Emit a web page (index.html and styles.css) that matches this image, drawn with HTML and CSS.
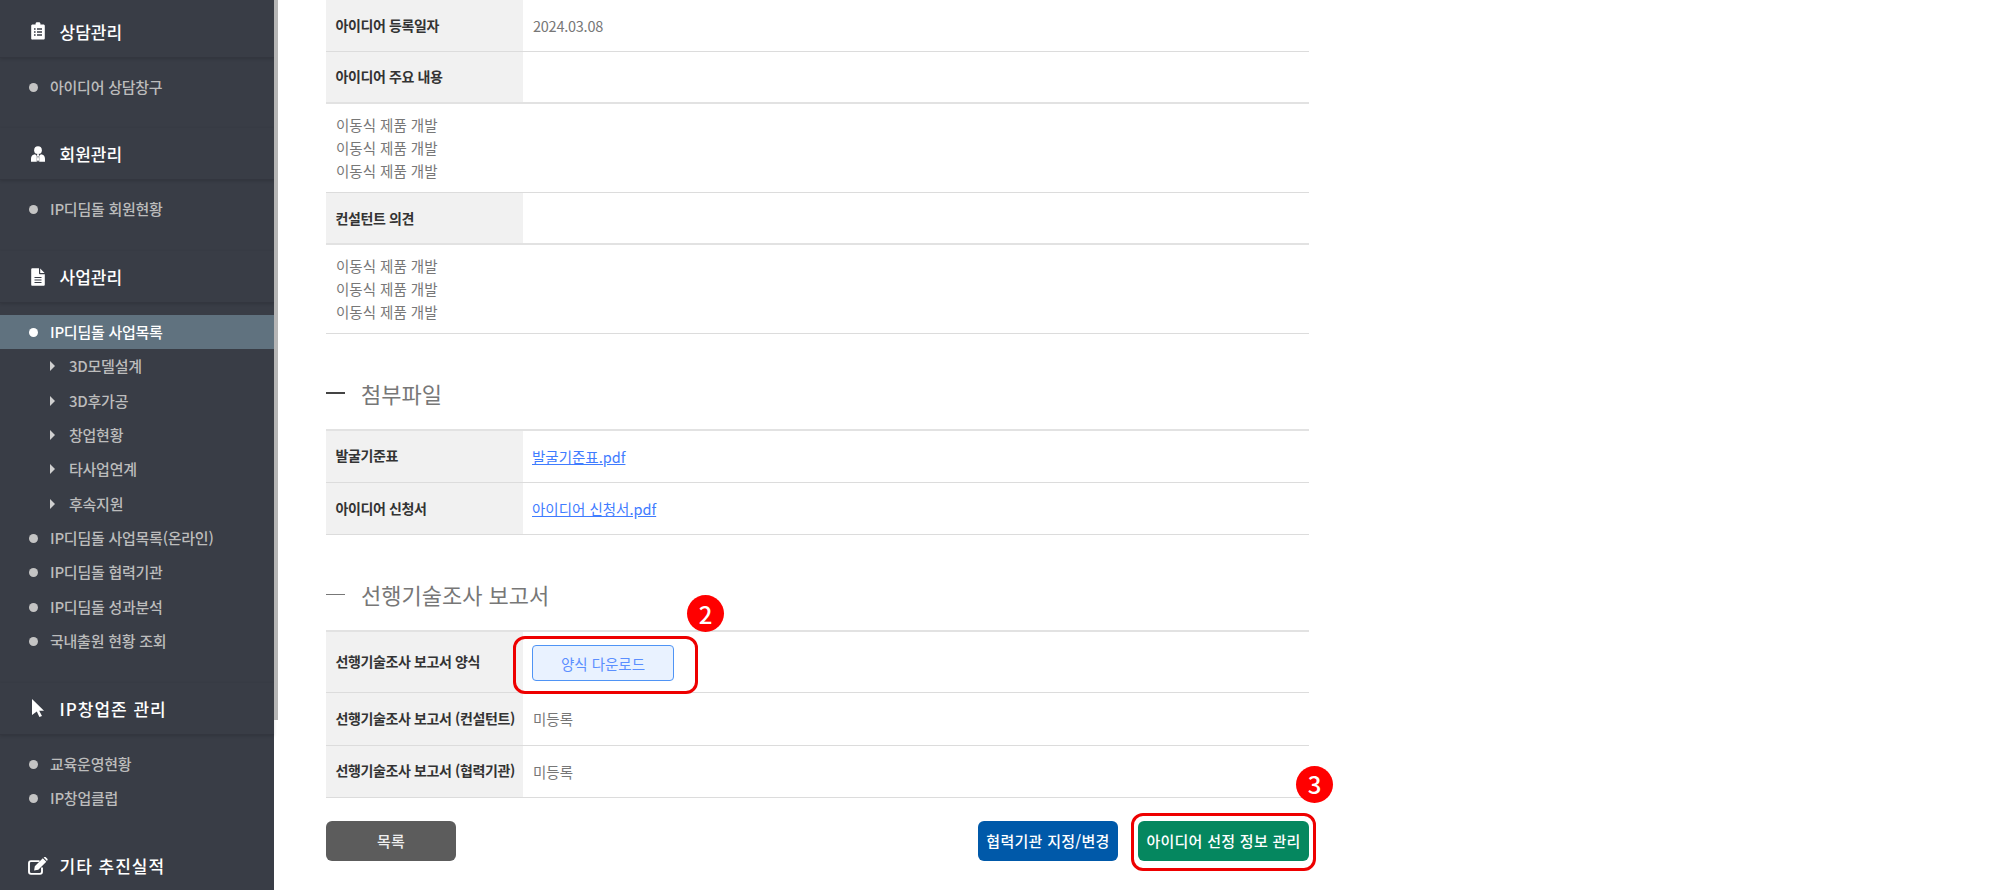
FILE: index.html
```html
<!DOCTYPE html>
<html lang="ko">
<head>
<meta charset="utf-8">
<title>선행기술조사 보고서</title>
<link rel="stylesheet" href="styles.css">
</head>
<body>
<div class="page">
  <aside class="sidebar">
    <div class="scrollbar"></div>
    <div class="side-inner">
      <section class="group">
        <h3 class="group-head">
          <svg class="gi" viewBox="0 0 14 18"><path fill="#fff" d="M1.5 2.5H4.6V1.6C4.6.8 5.2.2 6 .2H8c.8 0 1.4.6 1.4 1.4v.9h3.1c.7 0 1.3.6 1.3 1.3v12.5c0 .7-.6 1.3-1.3 1.3h-11C.8 17.8.2 17.2.2 16.5V3.8c0-.7.6-1.3 1.3-1.3z"/><path stroke="#393d46" stroke-width="1.4" d="M3 7h1.6M6 7h5M3 10h1.6M6 10h5M3 13h1.6M6 13h5"/></svg>
          <span>상담관리</span>
        </h3>
        <ul class="menu">
          <li class="item">아이디어 상담창구</li>
        </ul>
      </section>
      <section class="group">
        <h3 class="group-head">
          <svg class="gi" viewBox="0 0 16 18"><circle fill="#fff" cx="8" cy="4.6" r="4.4"/><path fill="#fff" d="M0 17.8v-3.3c0-3 1.8-5 4.6-5.2L6.6 11v6.8zM16 17.8v-3.3c0-3-1.8-5-4.6-5.2L9.4 11v6.8z"/><path fill="#fff" d="M7.2 9h1.6l.4 1.6-.6 1 .7 4-1.3 2.2-1.3-2.2.7-4-.6-1z"/></svg>
          <span>회원관리</span>
        </h3>
        <ul class="menu">
          <li class="item">IP디딤돌 회원현황</li>
        </ul>
      </section>
      <section class="group">
        <h3 class="group-head">
          <svg class="gi" viewBox="0 0 14 18"><path fill="#fff" d="M1.3.2H8v5.1c0 .5.4.9.9.9h4.9v10.3c0 .7-.5 1.3-1.2 1.3H1.3C.6 17.8.2 17.2.2 16.5V1.5C.2.8.6.2 1.3.2zM9.2.4l4.4 4.6H9.2z"/><path stroke="#393d46" stroke-width="1.1" d="M3.5 9.5h7M3.5 12h7M3.5 14.5h7"/></svg>
          <span>사업관리</span>
        </h3>
        <ul class="menu">
          <li class="item active">IP디딤돌 사업목록</li>
          <li class="sub">3D모델설계</li>
          <li class="sub">3D후가공</li>
          <li class="sub">창업현황</li>
          <li class="sub">타사업연계</li>
          <li class="sub">후속지원</li>
          <li class="item">IP디딤돌 사업목록(온라인)</li>
          <li class="item">IP디딤돌 협력기관</li>
          <li class="item">IP디딤돌 성과분석</li>
          <li class="item">국내출원 현황 조회</li>
        </ul>
      </section>
      <section class="group">
        <h3 class="group-head wide">
          <svg class="gi" viewBox="0 0 14 18"><path fill="#fff" d="M1 0l12 11.8H8.2l2.8 5.2-2.6 1-2.6-5.4L1 16z"/></svg>
          <span>IP창업존 관리</span>
        </h3>
        <ul class="menu">
          <li class="item">교육운영현황</li>
          <li class="item">IP창업클럽</li>
        </ul>
      </section>
      <section class="group">
        <h3 class="group-head wide plain">
          <svg class="gi gi-edit" viewBox="0 0 20 18"><path fill="none" stroke="#fff" stroke-width="1.9" d="M14 10.5v4.3c0 1.2-.9 2.1-2 2.1H3c-1.1 0-2-.9-2-2.1V6.2c0-1.2.9-2.1 2-2.1h8.5"/><path fill="#fff" d="M6.8 9.2l8-8 3.5 3.5-8 8-4.2.8zM15.6.5l.9-.4c.5-.2 1-.1 1.3.2l1.5 1.5c.4.4.4 1 .1 1.4l-.4.8z"/></svg>
          <span>기타 추진실적</span>
        </h3>
      </section>
    </div>
  </aside>

  <main class="content">
    <table class="info">
      <tr class="r51">
        <th>아이디어 등록일자</th>
        <td class="date">2024.03.08</td>
      </tr>
      <tr class="r52 thick">
        <th class="lift">아이디어 주요 내용</th>
        <td></td>
      </tr>
      <tr class="r89">
        <td colspan="2" class="block">이동식 제품 개발<br>이동식 제품 개발<br>이동식 제품 개발</td>
      </tr>
      <tr class="r52 thick">
        <th>컨설턴트 의견</th>
        <td></td>
      </tr>
      <tr class="r89">
        <td colspan="2" class="block">이동식 제품 개발<br>이동식 제품 개발<br>이동식 제품 개발</td>
      </tr>
    </table>

    <h2 class="title title-bold">첨부파일</h2>
    <table class="info top">
      <tr class="r53">
        <th>발굴기준표</th>
        <td><a class="file" href="#">발굴기준표.pdf</a></td>
      </tr>
      <tr class="r52">
        <th>아이디어 신청서</th>
        <td><a class="file" href="#">아이디어 신청서.pdf</a></td>
      </tr>
    </table>

    <h2 class="title">선행기술조사 보고서</h2>
    <table class="info top">
      <tr class="r61">
        <th>선행기술조사 보고서 양식</th>
        <td class="dl-cell">
          <button class="btn-dl" type="button">양식 다운로드</button>
          <span class="callout callout-2"></span>
          <span class="badge badge-2">2</span>
        </td>
      </tr>
      <tr class="r53">
        <th>선행기술조사 보고서 (컨설턴트)</th>
        <td>미등록</td>
      </tr>
      <tr class="r52">
        <th>선행기술조사 보고서 (협력기관)</th>
        <td>미등록</td>
      </tr>
    </table>

    <div class="actions">
      <button class="btn btn-gray" type="button">목록</button>
      <div class="actions-right">
        <button class="btn btn-blue" type="button">협력기관 지정/변경</button>
        <div class="mark-wrap">
          <button class="btn btn-green" type="button">아이디어 선정 정보 관리</button>
          <span class="callout callout-3"></span>
          <span class="badge badge-3">3</span>
        </div>
      </div>
    </div>
  </main>
</div>
</body>
</html>
```

FILE: styles.css
```css
* { box-sizing: border-box; }
html, body { margin: 0; padding: 0; height: 890px; overflow: hidden; background: #fff; }
body { font-family: "Noto Sans CJK KR", "Noto Sans", sans-serif; color: #777; }
.page { display: flex; height: 890px; overflow: hidden; }

/* sidebar */
.sidebar { position: relative; flex: 0 0 274px; width: 274px; height: 890px; background: #393d46; }
.scrollbar { position: absolute; left: 274px; top: 0; width: 4px; height: 720px; background: #b6b6b6; }
.side-inner { margin-top: -20.5px; }
.group { margin-bottom: 24.45px; }
.group-head { display: flex; align-items: center; height: 52px; margin: 0; font-size: 17px; font-weight: 500; color: #fff; border-bottom: 1px solid #33363f; box-shadow: 0 1px 3px rgba(0,0,0,.15); }
.group-head.plain { border-bottom: 0; box-shadow: none; }
.group:first-child .group-head { height: 78px; padding-top: 26px; }
.group-head span { margin-left: 59.5px; }
.group-head.wide span { letter-spacing: 1px; }
.gi { position: absolute; left: 31px; width: 14px; height: 18px; flex: none; }
.gi-edit { left: 28px; width: 20px; }
.menu { list-style: none; margin: 0; padding: 12px 0 0; }
.item, .sub { position: relative; height: 34.33px; line-height: 33px; font-size: 15px; font-weight: 500; color: #bcbcbc; letter-spacing: -.25px; }
.item { padding-left: 50px; }
.item::before { content: ""; position: absolute; left: 29px; top: 13px; width: 9px; height: 9px; border-radius: 50%; background: #c4c4c4; }
.item.active { background: #60727f; color: #fff; }
.item.active::before { background: #fff; }
.sub { padding-left: 69px; }
.sub::before { content: ""; position: absolute; left: 50px; top: 12px; border-left: 5px solid #d0d0d0; border-top: 5px solid transparent; border-bottom: 5px solid transparent; }

/* content */
.content { flex: 0 0 983px; width: 983px; margin-left: 52px; }
.info { width: 983px; border-collapse: collapse; table-layout: fixed; font-size: 14px; }
.info.top { border-top: 2px solid #e2e2e2; }
.info.top th, .info th.lift { padding-bottom: 2px; }
.info tr { border-bottom: 1px solid #dcdcdc; }
.info tr.thick { border-bottom: 2px solid #e2e2e2; }
.info th { width: 197px; padding: 0 0 0 9.5px; background: #f1f1f1; color: #333; font-size: 14px; font-weight: 700; text-align: left; white-space: nowrap; letter-spacing: -.38px; }
.info td { padding: 0 0 0 10px; color: #777; font-size: 14.5px; }
.info td.block { line-height: 23px; }
.info td.date { letter-spacing: -.25px; }
.r89 { height: 89px; }
.r51 { height: 51px; }
.r52 { height: 52px; }
.r53 { height: 53px; }
.r61 { height: 61px; }
.file { margin-left: -1px; color: #3f7cff; text-decoration: underline; }

.title { display: flex; align-items: center; height: 36px; margin: 41px 0 18px; font-size: 22px; font-weight: 400; color: #777; line-height: 36px; }
.title::before { content: ""; width: 19px; height: 1px; margin-right: 16px; background: #777; }
.title-bold::before { height: 2px; background: #444; }

.info td.dl-cell { position: relative; padding-top: 3px; }
.btn-dl { width: 142px; height: 36px; margin-left: -1px; padding: 0; border: 1px solid #4f94f5; border-radius: 4px; background: #e9f2ff; color: #5b8fff; font: 400 14.5px "Noto Sans CJK KR", sans-serif; }
.callout { position: absolute; border: 3px solid #ee0000; border-radius: 12px; pointer-events: none; }
.callout-2 { left: -10px; top: 4px; width: 185px; height: 58px; }
.badge { position: absolute; display: flex; align-items: center; justify-content: center; width: 37px; height: 37px; border-radius: 50%; background: #f00; color: #fff; font-size: 24px; font-weight: 500; line-height: 1; }
.badge-2 { left: 164px; top: -37px; }

.actions { display: flex; justify-content: space-between; margin-top: 23px; }
.actions-right { display: flex; gap: 20px; }
.mark-wrap { position: relative; }
.btn { height: 40px; border: 0; border-radius: 6px; color: #fff; font: 500 15px "Noto Sans CJK KR", sans-serif; letter-spacing: .28px; padding: 0; }
.btn-gray { width: 130px; background: #5c5c5c; color: #eee; }
.btn-blue { width: 140px; background: #0059a9; }
.btn-green { display: block; width: 171px; background: #05875f; }
.callout-3 { left: -7px; top: -8px; width: 185px; height: 58px; }
.badge-3 { left: 158px; top: -55px; }
```
